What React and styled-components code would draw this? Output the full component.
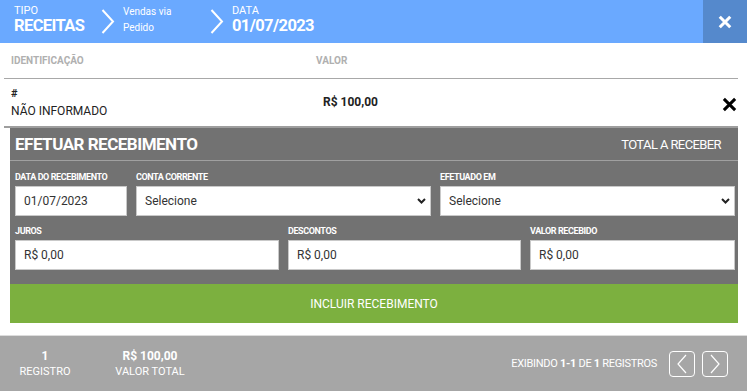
import React from "react";
import styled, { createGlobalStyle } from "styled-components";

const GlobalStyle = createGlobalStyle`
  body {
    margin: 0;
    font-family: Roboto, "Liberation Sans", sans-serif;
    background: #fff;
    color: #333;
  }
  * {
    box-sizing: border-box;
  }
`;

const Page = styled.div`
  width: 747px;
  height: 391px;
  display: flex;
  flex-direction: column;
  overflow: hidden;
`;

const Header = styled.header`
  height: 43px;
  display: flex;
  align-items: stretch;
  background: #6aa9ff;
  color: #fff;
`;

const Crumbs = styled.div`
  flex: 1;
  display: flex;
  align-items: center;
  padding: 0 0 3px 14px;
`;

const Crumb = styled.div`
  display: flex;
  flex-direction: column;
  justify-content: center;
  width: ${(p) => p.$w || "auto"};
  .label {
    display: block;
    font-size: ${(p) => (p.$small ? "10px" : "11px")};
    line-height: 12px;
  }
  .value {
    display: block;
    font-size: ${(p) => (p.$small ? "10px" : "16.5px")};
    line-height: ${(p) => (p.$small ? "12px" : "18px")};
    font-weight: ${(p) => (p.$small ? 400 : 700)};
    margin-top: ${(p) => (p.$small ? "4px" : "0")};
    letter-spacing: ${(p) => (p.$small ? "0" : "-0.6px")};
    white-space: nowrap;
  }
`;

const Chevron = styled.svg`
  width: 14px;
  height: 25px;
  margin: 3px 8px 0 18px;
`;

const HeaderClose = styled.button`
  width: 44px;
  border: 0;
  background: #5589cc;
  display: flex;
  align-items: center;
  justify-content: center;
  cursor: pointer;
  padding: 0;
`;

const Body = styled.div`
  padding: 0 9px 0 4px;
`;

const TableHead = styled.div`
  height: 36px;
  display: flex;
  align-items: center;
  border-bottom: 1px solid #a8a8a8;
  font-size: 10px;
  font-weight: 700;
  color: #b0b0b0;
  span:first-child {
    padding-left: 7px;
    width: 312px;
  }
`;

const Row = styled.div`
  height: 49px;
  display: flex;
  align-items: center;
  border-bottom: 2px solid #9e9e9e;
  font-size: 12px;
  color: #222;
`;

const Ident = styled.div`
  width: 319px;
  padding-left: 7px;
  line-height: 14px;
  b {
    display: block;
    font-size: 11px;
    margin-bottom: 3px;
  }
`;

const Amount = styled.div`
  flex: 1;
  font-weight: 700;
  font-size: 12px;
  margin-top: -1px;
`;

const RowClose = styled.button`
  border: 0;
  background: none;
  padding: 0;
  margin-right: 1px;
  display: flex;
  margin-top: 4px;
  cursor: pointer;
`;

const Panel = styled.section`
  margin-left: 6px;
  background: #727272;
  color: #fff;
`;

const PanelTitle = styled.div`
  height: 33px;
  display: flex;
  align-items: center;
  justify-content: space-between;
  padding: 0 17px 0 5px;
  border-bottom: 1px solid #a0a0a0;
  h2 {
    margin: 0;
    font-size: 17px;
    font-weight: 700;
    letter-spacing: -0.5px;
  }
  span {
    font-size: 13px;
    letter-spacing: -0.6px;
  }
`;

const Fields = styled.div`
  padding: 9px 3px 14px 5px;
  display: flex;
  flex-direction: column;
  gap: 8px;
`;

const FieldRow = styled.div`
  display: grid;
  grid-template-columns: ${(p) => p.$cols};
  gap: 9px;
`;

const Field = styled.label`
  display: flex;
  flex-direction: column;
  span {
    font-weight: 700;
    font-size: 9px;
    line-height: 14px;
    margin-bottom: 2px;
    letter-spacing: -0.4px;
    white-space: nowrap;
  }
`;

const Input = styled.input`
  height: 30px;
  border: 1px solid #c9c9c9;
  background: #fff;
  padding: 0 8px;
  font-family: Roboto, "Liberation Sans", sans-serif;
  font-size: 12px;
  color: #333;
  outline: none;
  width: 100%;
`;

const SelectBox = styled.div`
  position: relative;
  select {
    appearance: none;
    width: 100%;
    height: 30px;
    border: 1px solid #c9c9c9;
    background: #fff;
    padding: 0 8px;
    font-family: Roboto, "Liberation Sans", sans-serif;
    font-size: 12px;
    color: #333;
    outline: none;
  }
  svg {
    position: absolute;
    right: 5px;
    top: 12px;
    pointer-events: none;
  }
`;

const SubmitButton = styled.button`
  width: 100%;
  height: 39px;
  border: 0;
  background: #7cb03f;
  color: #fff;
  font-family: Roboto, "Liberation Sans", sans-serif;
  font-size: 12px;
  cursor: pointer;
`;

const Footer = styled.footer`
  margin-top: auto;
  height: 56px;
  border-top: 1px solid #dcdcdc;
  background: #a6a6a6;
  color: #fff;
  display: flex;
  align-items: center;
  padding: 0 19px 0 10px;
`;

const Stat = styled.div`
  width: ${(p) => p.$w};
  display: flex;
  flex-direction: column;
  align-items: center;
  line-height: 15px;
  b {
    font-size: 12px;
  }
  span {
    font-size: 11px;
  }
`;

const Pager = styled.div`
  margin-left: auto;
  display: flex;
  align-items: center;
  gap: 7px;
  font-size: 11px;
  letter-spacing: -0.3px;
  p {
    margin: 0 5px 0 0;
  }
`;

const PageButton = styled.button`
  width: 26px;
  height: 26px;
  border: 1px solid #fff;
  border-radius: 4px;
  background: transparent;
  display: flex;
  align-items: center;
  justify-content: center;
  padding: 0;
  cursor: pointer;
`;

const Arrow = ({ dir }) => (
  <svg width="12" height="20" viewBox="0 0 12 20">
    <path
      d={dir === "left" ? "M10 1 L2 10 L10 19" : "M2 1 L10 10 L2 19"}
      fill="none"
      stroke="#fff"
      strokeWidth="1.2"
    />
  </svg>
);

const SelectArrow = () => (
  <svg width="9" height="6" viewBox="0 0 9 6">
    <path d="M1 1 L4.5 4.5 L8 1" fill="none" stroke="#222" strokeWidth="2" />
  </svg>
);

const Cross = ({ color, size, width }) => (
  <svg width={size} height={size} viewBox="0 0 12 12">
    <path d="M1.5 1.5 L10.5 10.5 M10.5 1.5 L1.5 10.5" stroke={color} strokeWidth={width} />
  </svg>
);

const HeaderChevron = () => (
  <Chevron viewBox="0 0 14 25">
    <path d="M1.5 1 L12 12.5 L1.5 24" fill="none" stroke="#fff" strokeWidth="2" />
  </Chevron>
);

export default function App() {
  return (
    <>
      <GlobalStyle />
      <Page>
        <Header>
          <Crumbs>
            <Crumb $w="69px">
              <span className="label">TIPO</span>
              <span className="value">RECEITAS</span>
            </Crumb>
            <HeaderChevron />
            <Crumb $small $w="69px">
              <span className="label">Vendas via</span>
              <span className="value">Pedido</span>
            </Crumb>
            <HeaderChevron />
            <Crumb>
              <span className="label">DATA</span>
              <span className="value">01/07/2023</span>
            </Crumb>
          </Crumbs>
          <HeaderClose aria-label="Fechar">
            <Cross color="#fff" size={14} width={2.6} />
          </HeaderClose>
        </Header>

        <Body>
          <TableHead>
            <span>IDENTIFICAÇÃO</span>
            <span>VALOR</span>
          </TableHead>
          <Row>
            <Ident>
              <b>#</b>
              NÃO INFORMADO
            </Ident>
            <Amount>R$ 100,00</Amount>
            <RowClose aria-label="Remover">
              <Cross color="#000" size={15} width={2.4} />
            </RowClose>
          </Row>

          <Panel>
            <PanelTitle>
              <h2>EFETUAR RECEBIMENTO</h2>
              <span>TOTAL A RECEBER</span>
            </PanelTitle>
            <Fields>
              <FieldRow $cols="112px 295px 295px">
                <Field>
                  <span>DATA DO RECEBIMENTO</span>
                  <Input defaultValue="01/07/2023" />
                </Field>
                <Field as="div">
                  <span>CONTA CORRENTE</span>
                  <SelectBox>
                    <select defaultValue="">
                      <option value="">Selecione</option>
                    </select>
                    <SelectArrow />
                  </SelectBox>
                </Field>
                <Field as="div">
                  <span>EFETUADO EM</span>
                  <SelectBox>
                    <select defaultValue="">
                      <option value="">Selecione</option>
                    </select>
                    <SelectArrow />
                  </SelectBox>
                </Field>
              </FieldRow>
              <FieldRow $cols="264px 233px 205px">
                <Field>
                  <span>JUROS</span>
                  <Input defaultValue="R$ 0,00" />
                </Field>
                <Field>
                  <span>DESCONTOS</span>
                  <Input defaultValue="R$ 0,00" />
                </Field>
                <Field>
                  <span>VALOR RECEBIDO</span>
                  <Input defaultValue="R$ 0,00" />
                </Field>
              </FieldRow>
            </Fields>
            <SubmitButton>INCLUIR RECEBIMENTO</SubmitButton>
          </Panel>
        </Body>

        <Footer>
          <Stat $w="70px">
            <b>1</b>
            <span>REGISTRO</span>
          </Stat>
          <Stat $w="140px">
            <b>R$ 100,00</b>
            <span>VALOR TOTAL</span>
          </Stat>
          <Pager>
            <p>
              EXIBINDO <b>1-1</b> DE <b>1</b> REGISTROS
            </p>
            <PageButton aria-label="Anterior">
              <Arrow dir="left" />
            </PageButton>
            <PageButton aria-label="Próximo">
              <Arrow dir="right" />
            </PageButton>
          </Pager>
        </Footer>
      </Page>
    </>
  );
}
